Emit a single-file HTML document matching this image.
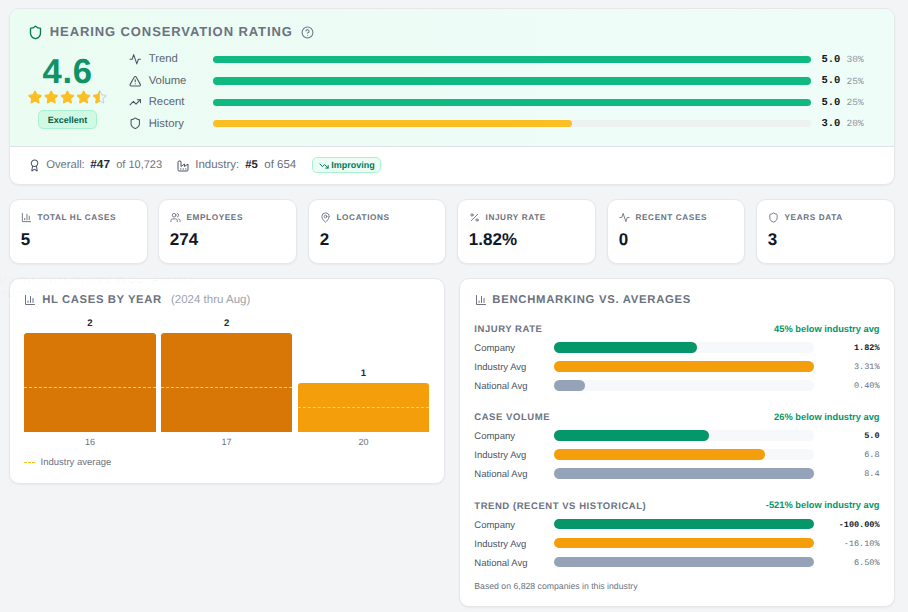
<!DOCTYPE html>
<html><head><meta charset="utf-8">
<style>
*{box-sizing:border-box;margin:0;padding:0}
html,body{width:908px;height:612px;overflow:hidden;background:#f3f4f6;font-family:"Liberation Sans",sans-serif;position:relative;text-rendering:geometricPrecision}
.a{position:absolute;white-space:nowrap}
.card{position:absolute;background:#fff;border:1px solid #e5e7eb;border-radius:10px;box-shadow:0 1px 2px rgba(0,0,0,0.05);overflow:hidden}
svg.i{position:absolute;fill:none;stroke-linecap:round;stroke-linejoin:round}
</style></head><body>
<div class="card" style="left:9px;top:8px;width:886px;height:177px"><div style="position:absolute;left:0;top:0;width:100%;height:138px;background:linear-gradient(90deg,#ebfcf3,#effdf9);border-bottom:1px solid #dfe2e6"></div></div>
<svg class="i" style="left:28.00px;top:25.00px" width="15" height="15" viewBox="0 0 24 24" stroke="#0a7d56" stroke-width="2.2"><path d="M20 13c0 5-3.5 7.5-7.66 8.95a1 1 0 0 1-.67-.01C7.5 20.5 4 18 4 13V6a1 1 0 0 1 1-1c2 0 4.5-1.2 6.24-2.72a1.17 1.17 0 0 1 1.52 0C14.51 3.81 17 5 19 5a1 1 0 0 1 1 1z"/></svg>
<div class="a" style="left:49.80px;top:25.08px;font:700 13px/13px 'Liberation Sans';color:#6b7280;letter-spacing:0.9px">HEARING CONSERVATION RATING</div>
<svg class="i" style="left:301.00px;top:25.70px" width="13" height="13" viewBox="0 0 24 24" stroke="#6b7280" stroke-width="1.9"><circle cx="12" cy="12" r="10"/><path d="M9.09 9a3 3 0 0 1 5.83 1c0 2-3 3-3 3"/><path d="M12 17h.01"/></svg>
<div class="a" style="left:42.50px;top:55.20px;font:700 34.6px/34.6px 'Liberation Sans';color:#0f9266;letter-spacing:0.7px">4.6</div>
<svg class="i" style="left:0;top:0" width="120" height="120" viewBox="0 0 120 120"><defs><clipPath id="half"><rect x="0" y="0" width="12" height="24"/></clipPath></defs><path transform="translate(27.70 90.0) scale(0.6083)" d="M11.525 2.295a.53.53 0 0 1 .95 0l2.31 4.679a2.123 2.123 0 0 0 1.595 1.16l5.166.756a.53.53 0 0 1 .294.904l-3.736 3.638a2.123 2.123 0 0 0-.611 1.878l.882 5.14a.53.53 0 0 1-.771.56l-4.618-2.428a2.122 2.122 0 0 0-1.973 0L6.396 21.01a.53.53 0 0 1-.77-.56l.881-5.139a2.122 2.122 0 0 0-.611-1.879L2.16 9.795a.53.53 0 0 1 .294-.906l5.165-.755a2.122 2.122 0 0 0 1.597-1.16z" fill="#fbbf24" stroke="#fbbf24" stroke-width="2"/><path transform="translate(43.90 90.0) scale(0.6083)" d="M11.525 2.295a.53.53 0 0 1 .95 0l2.31 4.679a2.123 2.123 0 0 0 1.595 1.16l5.166.756a.53.53 0 0 1 .294.904l-3.736 3.638a2.123 2.123 0 0 0-.611 1.878l.882 5.14a.53.53 0 0 1-.771.56l-4.618-2.428a2.122 2.122 0 0 0-1.973 0L6.396 21.01a.53.53 0 0 1-.77-.56l.881-5.139a2.122 2.122 0 0 0-.611-1.879L2.16 9.795a.53.53 0 0 1 .294-.906l5.165-.755a2.122 2.122 0 0 0 1.597-1.16z" fill="#fbbf24" stroke="#fbbf24" stroke-width="2"/><path transform="translate(60.10 90.0) scale(0.6083)" d="M11.525 2.295a.53.53 0 0 1 .95 0l2.31 4.679a2.123 2.123 0 0 0 1.595 1.16l5.166.756a.53.53 0 0 1 .294.904l-3.736 3.638a2.123 2.123 0 0 0-.611 1.878l.882 5.14a.53.53 0 0 1-.771.56l-4.618-2.428a2.122 2.122 0 0 0-1.973 0L6.396 21.01a.53.53 0 0 1-.77-.56l.881-5.139a2.122 2.122 0 0 0-.611-1.879L2.16 9.795a.53.53 0 0 1 .294-.906l5.165-.755a2.122 2.122 0 0 0 1.597-1.16z" fill="#fbbf24" stroke="#fbbf24" stroke-width="2"/><path transform="translate(76.30 90.0) scale(0.6083)" d="M11.525 2.295a.53.53 0 0 1 .95 0l2.31 4.679a2.123 2.123 0 0 0 1.595 1.16l5.166.756a.53.53 0 0 1 .294.904l-3.736 3.638a2.123 2.123 0 0 0-.611 1.878l.882 5.14a.53.53 0 0 1-.771.56l-4.618-2.428a2.122 2.122 0 0 0-1.973 0L6.396 21.01a.53.53 0 0 1-.77-.56l.881-5.139a2.122 2.122 0 0 0-.611-1.879L2.16 9.795a.53.53 0 0 1 .294-.906l5.165-.755a2.122 2.122 0 0 0 1.597-1.16z" fill="#fbbf24" stroke="#fbbf24" stroke-width="2"/><g transform="translate(92.50 90.0) scale(0.6083)"><path d="M11.525 2.295a.53.53 0 0 1 .95 0l2.31 4.679a2.123 2.123 0 0 0 1.595 1.16l5.166.756a.53.53 0 0 1 .294.904l-3.736 3.638a2.123 2.123 0 0 0-.611 1.878l.882 5.14a.53.53 0 0 1-.771.56l-4.618-2.428a2.122 2.122 0 0 0-1.973 0L6.396 21.01a.53.53 0 0 1-.77-.56l.881-5.139a2.122 2.122 0 0 0-.611-1.879L2.16 9.795a.53.53 0 0 1 .294-.906l5.165-.755a2.122 2.122 0 0 0 1.597-1.16z" fill="none" stroke="#d1d5db" stroke-width="2"/><path d="M11.525 2.295a.53.53 0 0 1 .95 0l2.31 4.679a2.123 2.123 0 0 0 1.595 1.16l5.166.756a.53.53 0 0 1 .294.904l-3.736 3.638a2.123 2.123 0 0 0-.611 1.878l.882 5.14a.53.53 0 0 1-.771.56l-4.618-2.428a2.122 2.122 0 0 0-1.973 0L6.396 21.01a.53.53 0 0 1-.77-.56l.881-5.139a2.122 2.122 0 0 0-.611-1.879L2.16 9.795a.53.53 0 0 1 .294-.906l5.165-.755a2.122 2.122 0 0 0 1.597-1.16z" fill="#fbbf24" stroke="#fbbf24" stroke-width="2" clip-path="url(#half)"/></g></svg>
<div class="a" style="left:38px;top:110px;width:59px;height:19px;border:1px solid #a7f3d0;background:#d1fae5;border-radius:5px"></div>
<div class="a" style="left:47.80px;top:116.06px;font:700 9px/9px 'Liberation Sans';color:#065f46;letter-spacing:0px">Excellent</div>
<svg class="i" style="left:129.10px;top:53.25px" width="12.5" height="12.5" viewBox="0 0 24 24" stroke="#4b5563" stroke-width="2"><path d="M22 12h-4l-3 9L9 3l-3 9H2"/></svg>
<div class="a" style="left:148.70px;top:54.25px;font:400 11.3px/11.3px 'Liberation Sans';color:#5b6472;letter-spacing:0px">Trend</div>
<div class="a" style="left:213.00px;top:55.80px;width:598.00px;height:7.60px;background:#10b981;border-radius:4px;"></div>
<div class="a" style="left:821.50px;top:54.90px;font:700 10.5px/10.5px 'Liberation Mono';color:#111827;letter-spacing:0px">5.0</div>
<div class="a" style="left:846.50px;top:55.47px;font:400 9.5px/9.5px 'Liberation Mono';color:#8f96a3;letter-spacing:0px">30%</div>
<svg class="i" style="left:129.10px;top:74.55px" width="12.5" height="12.5" viewBox="0 0 24 24" stroke="#4b5563" stroke-width="2"><path d="m21.73 18-8-14a2 2 0 0 0-3.48 0l-8 14A2 2 0 0 0 4 21h16a2 2 0 0 0 1.73-3Z"/><path d="M12 9v4"/><path d="M12 17h.01"/></svg>
<div class="a" style="left:148.70px;top:76.45px;font:400 11.3px/11.3px 'Liberation Sans';color:#5b6472;letter-spacing:0px">Volume</div>
<div class="a" style="left:213.00px;top:77.10px;width:598.00px;height:7.60px;background:#10b981;border-radius:4px;"></div>
<div class="a" style="left:821.50px;top:76.20px;font:700 10.5px/10.5px 'Liberation Mono';color:#111827;letter-spacing:0px">5.0</div>
<div class="a" style="left:846.50px;top:76.77px;font:400 9.5px/9.5px 'Liberation Mono';color:#8f96a3;letter-spacing:0px">25%</div>
<svg class="i" style="left:129.10px;top:95.95px" width="12.5" height="12.5" viewBox="0 0 24 24" stroke="#4b5563" stroke-width="2"><polyline points="22 7 13.5 15.5 8.5 10.5 2 17"/><polyline points="16 7 22 7 22 13"/></svg>
<div class="a" style="left:148.70px;top:97.45px;font:400 11.3px/11.3px 'Liberation Sans';color:#5b6472;letter-spacing:0px">Recent</div>
<div class="a" style="left:213.00px;top:98.50px;width:598.00px;height:7.60px;background:#10b981;border-radius:4px;"></div>
<div class="a" style="left:821.50px;top:97.60px;font:700 10.5px/10.5px 'Liberation Mono';color:#111827;letter-spacing:0px">5.0</div>
<div class="a" style="left:846.50px;top:98.17px;font:400 9.5px/9.5px 'Liberation Mono';color:#8f96a3;letter-spacing:0px">25%</div>
<svg class="i" style="left:129.10px;top:117.25px" width="12.5" height="12.5" viewBox="0 0 24 24" stroke="#4b5563" stroke-width="2"><path d="M20 13c0 5-3.5 7.5-7.66 8.95a1 1 0 0 1-.67-.01C7.5 20.5 4 18 4 13V6a1 1 0 0 1 1-1c2 0 4.5-1.2 6.24-2.72a1.17 1.17 0 0 1 1.52 0C14.51 3.81 17 5 19 5a1 1 0 0 1 1 1z"/></svg>
<div class="a" style="left:148.70px;top:119.35px;font:400 11.3px/11.3px 'Liberation Sans';color:#5b6472;letter-spacing:0px">History</div>
<div class="a" style="left:213.00px;top:119.80px;width:598.00px;height:7.60px;background:#edf1ef;border-radius:4px;"></div>
<div class="a" style="left:213.00px;top:119.80px;width:358.80px;height:7.60px;background:#fbbf24;border-radius:4px;"></div>
<div class="a" style="left:821.50px;top:118.90px;font:700 10.5px/10.5px 'Liberation Mono';color:#111827;letter-spacing:0px">3.0</div>
<div class="a" style="left:846.50px;top:119.47px;font:400 9.5px/9.5px 'Liberation Mono';color:#8f96a3;letter-spacing:0px">20%</div>
<svg class="i" style="left:27.60px;top:159.10px" width="13" height="13" viewBox="0 0 24 24" stroke="#4b5563" stroke-width="1.9"><path d="m15.477 12.89 1.515 8.526a.5.5 0 0 1-.81.47l-3.58-2.687a1 1 0 0 0-1.197 0l-3.586 2.686a.5.5 0 0 1-.81-.469l1.514-8.526"/><circle cx="12" cy="8" r="6"/></svg>
<div class="a" style="left:46.20px;top:160.44px;font:400 11.2px/11.2px 'Liberation Sans';color:#6b7280;letter-spacing:0px">Overall:</div>
<div class="a" style="left:90.30px;top:159.25px;font:700 11.8px/11.8px 'Liberation Sans';color:#1f2937;letter-spacing:0px">#47</div>
<div class="a" style="left:116.20px;top:160.45px;font:400 11px/11px 'Liberation Sans';color:#6b7280;letter-spacing:0px">of 10,723</div>
<svg class="i" style="left:176.60px;top:159.60px" width="12" height="12" viewBox="0 0 24 24" stroke="#4b5563" stroke-width="2"><path d="M2 20a2 2 0 0 0 2 2h16a2 2 0 0 0 2-2V8l-7 5V8l-7 5V4a2 2 0 0 0-2-2H4a2 2 0 0 0-2 2Z"/><path d="M17 18h1"/><path d="M12 18h1"/><path d="M7 18h1"/></svg>
<div class="a" style="left:195.20px;top:160.45px;font:400 11.5px/11.5px 'Liberation Sans';color:#6b7280;letter-spacing:0px">Industry:</div>
<div class="a" style="left:245.30px;top:160.24px;font:700 11.3px/11.3px 'Liberation Sans';color:#1f2937;letter-spacing:0px">#5</div>
<div class="a" style="left:264.30px;top:160.45px;font:400 11.5px/11.5px 'Liberation Sans';color:#6b7280;letter-spacing:0px">of 654</div>
<div class="a" style="left:312px;top:157px;width:69px;height:16px;border:1px solid #a7f3d0;background:#ecfdf5;border-radius:5px"></div>
<svg class="i" style="left:319.00px;top:160.50px" width="10" height="10" viewBox="0 0 24 24" stroke="#047857" stroke-width="2.4"><polyline points="22 17 13.5 8.5 8.5 13.5 2 7"/><polyline points="16 17 22 17 22 11"/></svg>
<div class="a" style="left:331.20px;top:161.16px;font:700 9px/9px 'Liberation Sans';color:#047857;letter-spacing:0px">Improving</div>
<div class="card" style="left:9px;top:199px;width:139px;height:65px"></div>
<svg class="i" style="left:21.00px;top:212.00px" width="11" height="11" viewBox="0 0 24 24" stroke="#6b7280" stroke-width="2"><path d="M3 3v18h18"/><path d="M18 17V9"/><path d="M13 17V5"/><path d="M8 17v-3"/></svg>
<div class="a" style="left:37.50px;top:214.07px;font:700 8.2px/8.2px 'Liberation Sans';color:#6b7280;letter-spacing:0.62px">TOTAL HL CASES</div>
<div class="a" style="left:20.80px;top:230.60px;font:700 17px/17px 'Liberation Sans';color:#111827;letter-spacing:0px">5</div>
<div class="card" style="left:158px;top:199px;width:139px;height:65px"></div>
<svg class="i" style="left:170.00px;top:212.00px" width="11" height="11" viewBox="0 0 24 24" stroke="#6b7280" stroke-width="2"><path d="M16 21v-2a4 4 0 0 0-4-4H6a4 4 0 0 0-4 4v2"/><circle cx="9" cy="7" r="4"/><path d="M22 21v-2a4 4 0 0 0-3-3.87"/><path d="M16 3.13a4 4 0 0 1 0 7.75"/></svg>
<div class="a" style="left:186.50px;top:214.07px;font:700 8.2px/8.2px 'Liberation Sans';color:#6b7280;letter-spacing:0.62px">EMPLOYEES</div>
<div class="a" style="left:169.80px;top:230.60px;font:700 17px/17px 'Liberation Sans';color:#111827;letter-spacing:0px">274</div>
<div class="card" style="left:308px;top:199px;width:138px;height:65px"></div>
<svg class="i" style="left:320.00px;top:212.00px" width="11" height="11" viewBox="0 0 24 24" stroke="#6b7280" stroke-width="2"><path d="M20 10c0 4.993-5.539 10.193-7.399 11.799a1 1 0 0 1-1.202 0C9.539 20.193 4 14.993 4 10a8 8 0 0 1 16 0"/><circle cx="12" cy="10" r="3"/></svg>
<div class="a" style="left:336.50px;top:214.07px;font:700 8.2px/8.2px 'Liberation Sans';color:#6b7280;letter-spacing:0.62px">LOCATIONS</div>
<div class="a" style="left:319.80px;top:230.60px;font:700 17px/17px 'Liberation Sans';color:#111827;letter-spacing:0px">2</div>
<div class="card" style="left:457px;top:199px;width:139px;height:65px"></div>
<svg class="i" style="left:469.00px;top:212.00px" width="11" height="11" viewBox="0 0 24 24" stroke="#6b7280" stroke-width="2"><line x1="19" x2="5" y1="5" y2="19"/><circle cx="6.5" cy="6.5" r="2.5"/><circle cx="17.5" cy="17.5" r="2.5"/></svg>
<div class="a" style="left:485.50px;top:214.07px;font:700 8.2px/8.2px 'Liberation Sans';color:#6b7280;letter-spacing:0.62px">INJURY RATE</div>
<div class="a" style="left:468.80px;top:230.60px;font:700 17px/17px 'Liberation Sans';color:#111827;letter-spacing:0px">1.82%</div>
<div class="card" style="left:607px;top:199px;width:138px;height:65px"></div>
<svg class="i" style="left:619.00px;top:212.00px" width="11" height="11" viewBox="0 0 24 24" stroke="#6b7280" stroke-width="2"><path d="M22 12h-4l-3 9L9 3l-3 9H2"/></svg>
<div class="a" style="left:635.50px;top:214.07px;font:700 8.2px/8.2px 'Liberation Sans';color:#6b7280;letter-spacing:0.62px">RECENT CASES</div>
<div class="a" style="left:618.80px;top:230.60px;font:700 17px/17px 'Liberation Sans';color:#111827;letter-spacing:0px">0</div>
<div class="card" style="left:756px;top:199px;width:139px;height:65px"></div>
<svg class="i" style="left:768.00px;top:212.00px" width="11" height="11" viewBox="0 0 24 24" stroke="#6b7280" stroke-width="2"><path d="M20 13c0 5-3.5 7.5-7.66 8.95a1 1 0 0 1-.67-.01C7.5 20.5 4 18 4 13V6a1 1 0 0 1 1-1c2 0 4.5-1.2 6.24-2.72a1.17 1.17 0 0 1 1.52 0C14.51 3.81 17 5 19 5a1 1 0 0 1 1 1z"/></svg>
<div class="a" style="left:784.50px;top:214.07px;font:700 8.2px/8.2px 'Liberation Sans';color:#6b7280;letter-spacing:0.62px">YEARS DATA</div>
<div class="a" style="left:767.80px;top:230.60px;font:700 17px/17px 'Liberation Sans';color:#111827;letter-spacing:0px">3</div>
<div class="card" style="left:9px;top:278px;width:436px;height:206px"></div>
<svg class="i" style="left:24.00px;top:294.00px" width="12" height="12" viewBox="0 0 24 24" stroke="#6b7280" stroke-width="2"><path d="M3 3v18h18"/><path d="M18 17V9"/><path d="M13 17V5"/><path d="M8 17v-3"/></svg>
<div class="a" style="left:42.30px;top:294.94px;font:700 11.3px/11.3px 'Liberation Sans';color:#6b7280;letter-spacing:0.6px">HL CASES BY YEAR</div>
<div class="a" style="left:171.00px;top:295.15px;font:400 11.5px/11.5px 'Liberation Sans';color:#9ca3af;letter-spacing:0px">(2024 thru Aug)</div>
<div class="a" style="left:24.00px;top:333.00px;width:132.00px;height:99.00px;background:#d97706;border-radius:0px;border-radius:3px 3px 0 0"></div>
<div class="a" style="left:24px;top:387px;width:132px;height:0;border-top:1px dashed #fcd34d"></div>
<div class="a" style="left:30.00px;width:120px;text-align:center;top:319.31px;font:700 9.5px/9.5px 'Liberation Sans';color:#1f2937;letter-spacing:0px">2</div>
<div class="a" style="left:30.00px;width:120px;text-align:center;top:437.98px;font:400 9px/9px 'Liberation Sans';color:#6b7280;letter-spacing:0px">16</div>
<div class="a" style="left:161.30px;top:333.00px;width:130.50px;height:99.00px;background:#d97706;border-radius:0px;border-radius:3px 3px 0 0"></div>
<div class="a" style="left:161.3px;top:387px;width:130.5px;height:0;border-top:1px dashed #fcd34d"></div>
<div class="a" style="left:166.55px;width:120px;text-align:center;top:319.31px;font:700 9.5px/9.5px 'Liberation Sans';color:#1f2937;letter-spacing:0px">2</div>
<div class="a" style="left:166.55px;width:120px;text-align:center;top:437.98px;font:400 9px/9px 'Liberation Sans';color:#6b7280;letter-spacing:0px">17</div>
<div class="a" style="left:298.00px;top:383.00px;width:131.00px;height:49.00px;background:#f59e0b;border-radius:0px;border-radius:3px 3px 0 0"></div>
<div class="a" style="left:298px;top:407px;width:131px;height:0;border-top:1px dashed #fcd34d"></div>
<div class="a" style="left:303.50px;width:120px;text-align:center;top:369.31px;font:700 9.5px/9.5px 'Liberation Sans';color:#1f2937;letter-spacing:0px">1</div>
<div class="a" style="left:303.50px;width:120px;text-align:center;top:437.98px;font:400 9px/9px 'Liberation Sans';color:#6b7280;letter-spacing:0px">20</div>
<div class="a" style="left:23.7px;top:462px;width:11.3px;height:0;border-top:1px dashed #fbbf24"></div>
<div class="a" style="left:40.50px;top:458.13px;font:400 9.5px/9.5px 'Liberation Sans';color:#6b7280;letter-spacing:0px">Industry average</div>
<div class="card" style="left:459px;top:278px;width:436px;height:329px"></div>
<svg class="i" style="left:474.50px;top:294.00px" width="12" height="12" viewBox="0 0 24 24" stroke="#6b7280" stroke-width="2"><path d="M3 3v18h18"/><path d="M18 17V9"/><path d="M13 17V5"/><path d="M8 17v-3"/></svg>
<div class="a" style="left:492.30px;top:294.94px;font:700 11.3px/11.3px 'Liberation Sans';color:#6b7280;letter-spacing:0.72px">BENCHMARKING VS. AVERAGES</div>
<div class="a" style="left:474.30px;top:325.31px;font:700 9.5px/9.5px 'Liberation Sans';color:#6b7280;letter-spacing:0.55px">INJURY RATE</div>
<div class="a" style="right:28.50px;top:324.84px;font:700 9.3px/9.3px 'Liberation Sans';color:#059669;letter-spacing:0px">45% below industry avg</div>
<div class="a" style="left:474.30px;top:344.03px;font:400 9.5px/9.5px 'Liberation Sans';color:#4b5563;letter-spacing:0px">Company</div>
<div class="a" style="left:554.00px;top:342.20px;width:260.00px;height:10.60px;background:#f7f8fa;border-radius:5.3px;"></div>
<div class="a" style="left:554.00px;top:342.20px;width:143.00px;height:10.60px;background:#059669;border-radius:5.3px;"></div>
<div class="a" style="right:28.50px;top:344.20px;font:700 8.5px/8.5px 'Liberation Mono';color:#111827;letter-spacing:0px">1.82%</div>
<div class="a" style="left:474.30px;top:363.03px;font:400 9.5px/9.5px 'Liberation Sans';color:#4b5563;letter-spacing:0px">Industry Avg</div>
<div class="a" style="left:554.00px;top:361.20px;width:260.00px;height:10.60px;background:#f59e0b;border-radius:5.3px;"></div>
<div class="a" style="right:28.50px;top:363.25px;font:400 8.5px/8.5px 'Liberation Mono';color:#6b7280;letter-spacing:0px">3.31%</div>
<div class="a" style="left:474.30px;top:382.03px;font:400 9.5px/9.5px 'Liberation Sans';color:#4b5563;letter-spacing:0px">National Avg</div>
<div class="a" style="left:554.00px;top:380.20px;width:260.00px;height:10.60px;background:#f7f8fa;border-radius:5.3px;"></div>
<div class="a" style="left:554.00px;top:380.20px;width:31.46px;height:10.60px;background:#94a3b8;border-radius:5.3px;"></div>
<div class="a" style="right:28.50px;top:382.25px;font:400 8.5px/8.5px 'Liberation Mono';color:#6b7280;letter-spacing:0px">0.40%</div>
<div class="a" style="left:474.30px;top:413.21px;font:700 9.5px/9.5px 'Liberation Sans';color:#6b7280;letter-spacing:0.55px">CASE VOLUME</div>
<div class="a" style="right:28.50px;top:412.74px;font:700 9.3px/9.3px 'Liberation Sans';color:#059669;letter-spacing:0px">26% below industry avg</div>
<div class="a" style="left:474.30px;top:431.93px;font:400 9.5px/9.5px 'Liberation Sans';color:#4b5563;letter-spacing:0px">Company</div>
<div class="a" style="left:554.00px;top:430.10px;width:260.00px;height:10.60px;background:#f7f8fa;border-radius:5.3px;"></div>
<div class="a" style="left:554.00px;top:430.10px;width:154.70px;height:10.60px;background:#059669;border-radius:5.3px;"></div>
<div class="a" style="right:28.50px;top:432.10px;font:700 8.5px/8.5px 'Liberation Mono';color:#111827;letter-spacing:0px">5.0</div>
<div class="a" style="left:474.30px;top:450.93px;font:400 9.5px/9.5px 'Liberation Sans';color:#4b5563;letter-spacing:0px">Industry Avg</div>
<div class="a" style="left:554.00px;top:449.10px;width:260.00px;height:10.60px;background:#f7f8fa;border-radius:5.3px;"></div>
<div class="a" style="left:554.00px;top:449.10px;width:210.60px;height:10.60px;background:#f59e0b;border-radius:5.3px;"></div>
<div class="a" style="right:28.50px;top:451.15px;font:400 8.5px/8.5px 'Liberation Mono';color:#6b7280;letter-spacing:0px">6.8</div>
<div class="a" style="left:474.30px;top:469.93px;font:400 9.5px/9.5px 'Liberation Sans';color:#4b5563;letter-spacing:0px">National Avg</div>
<div class="a" style="left:554.00px;top:468.10px;width:260.00px;height:10.60px;background:#94a3b8;border-radius:5.3px;"></div>
<div class="a" style="right:28.50px;top:470.15px;font:400 8.5px/8.5px 'Liberation Mono';color:#6b7280;letter-spacing:0px">8.4</div>
<div class="a" style="left:474.30px;top:501.91px;font:700 9.5px/9.5px 'Liberation Sans';color:#6b7280;letter-spacing:0.55px">TREND (RECENT VS HISTORICAL)</div>
<div class="a" style="right:28.50px;top:501.44px;font:700 9.3px/9.3px 'Liberation Sans';color:#059669;letter-spacing:0px">-521% below industry avg</div>
<div class="a" style="left:474.30px;top:520.63px;font:400 9.5px/9.5px 'Liberation Sans';color:#4b5563;letter-spacing:0px">Company</div>
<div class="a" style="left:554.00px;top:518.80px;width:260.00px;height:10.60px;background:#059669;border-radius:5.3px;"></div>
<div class="a" style="right:28.50px;top:520.80px;font:700 8.5px/8.5px 'Liberation Mono';color:#111827;letter-spacing:0px">-100.00%</div>
<div class="a" style="left:474.30px;top:539.63px;font:400 9.5px/9.5px 'Liberation Sans';color:#4b5563;letter-spacing:0px">Industry Avg</div>
<div class="a" style="left:554.00px;top:537.80px;width:260.00px;height:10.60px;background:#f59e0b;border-radius:5.3px;"></div>
<div class="a" style="right:28.50px;top:539.85px;font:400 8.5px/8.5px 'Liberation Mono';color:#6b7280;letter-spacing:0px">-16.10%</div>
<div class="a" style="left:474.30px;top:558.63px;font:400 9.5px/9.5px 'Liberation Sans';color:#4b5563;letter-spacing:0px">National Avg</div>
<div class="a" style="left:554.00px;top:556.80px;width:260.00px;height:10.60px;background:#94a3b8;border-radius:5.3px;"></div>
<div class="a" style="right:28.50px;top:558.85px;font:400 8.5px/8.5px 'Liberation Mono';color:#6b7280;letter-spacing:0px">6.50%</div>
<div class="a" style="left:474.30px;top:581.83px;font:400 8.7px/8.7px 'Liberation Sans';color:#6b7280;letter-spacing:0px">Based on 6,828 companies in this industry</div>
<div class="a" style="left:-49px;top:272.5px;font:400 11px/14px 'Liberation Sans';color:rgba(17,24,39,0.04)">Total hearing loss cases reported to OSHA across<br>all years and locations.</div>
</body></html>
